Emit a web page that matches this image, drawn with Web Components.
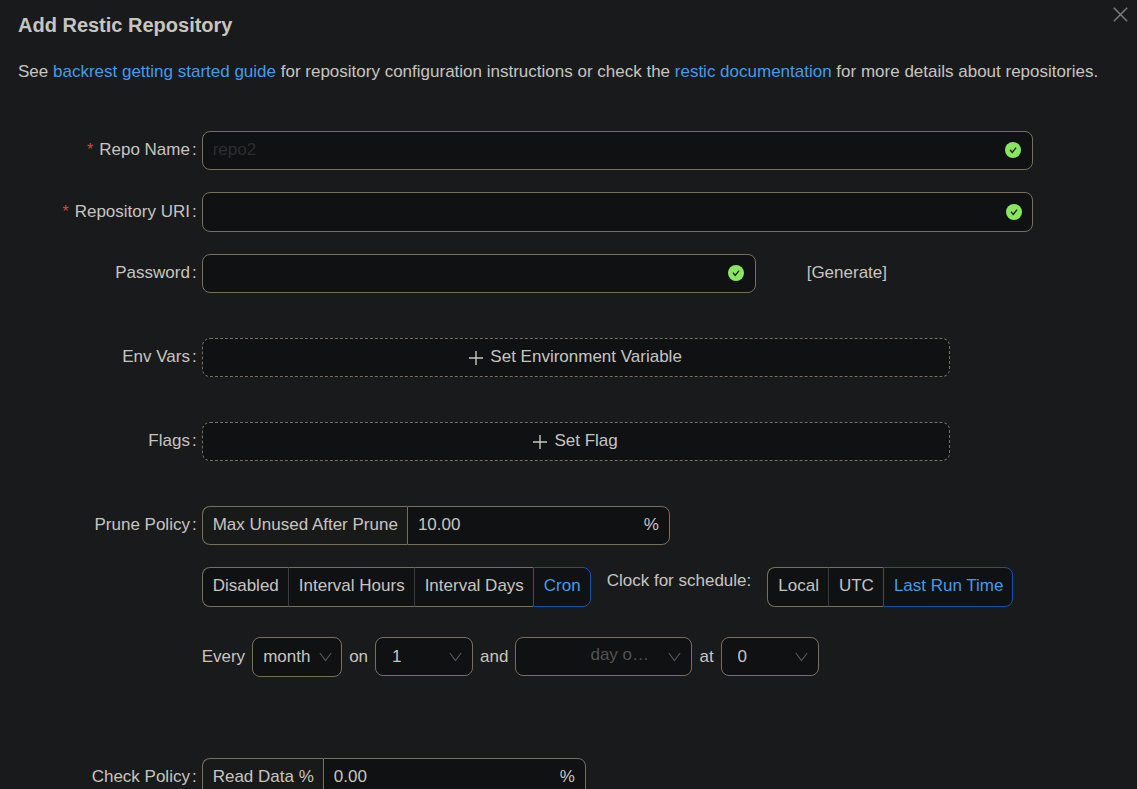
<!DOCTYPE html>
<html lang="en">
<head>
<meta charset="utf-8">
<title>Add Restic Repository</title>
<style>
	body {
		margin: 0;
		background: #181a1b;
		color: #c8c5c0;
		font: 17px/27px "Liberation Sans", Arial, sans-serif;
		--field: #0f1112;
		--addon: #181a19;
		--line: #7a6f5f;
		--divider: #3b3e40;
		--link: #459be8;
		--active: #1253b2;
		--muted: #545352;
	}
</style>
</head>
<body>

<repo-modal></repo-modal>

<script>
const define = (name, html, setup) => {
	const template = document.createElement('template');
	template.innerHTML = html;

	customElements.define(name, class extends HTMLElement {
		constructor() {
			super();
			this.attachShadow({mode: 'open'}).appendChild(template.content.cloneNode(true));
		}

		connectedCallback() {
			if (setup && !this.ready) {
				this.ready = true;
				setup(this, this.shadowRoot);
			}
		}
	});
};

// label column, control column and a spare column on the right
define('form-row', `
	<style>
		:host { display: grid; grid-template-columns: 4fr 18fr 2fr; margin-bottom: 22px; }
		:host([wide]) { margin-bottom: 45px; }
		.label { text-align: right; padding: 5px 5px 0 0; white-space: nowrap; }
		:host([tall]) .label { padding-top: 6px; }
		.colon { margin-left: 2px; }
		.star { display: none; color: #d04a49; margin-right: 6px; font-size: 16px; }
		:host([required]) .star { display: inline; }
	</style>
	<div class="label"><span class="star">*</span><span class="text"></span><span class="colon">:</span></div>
	<div><slot></slot></div>
`, (el, root) => {
	root.querySelector('.text').textContent = el.getAttribute('label');
});

define('text-field', `
	<style>
		:host { display: flex; align-items: center; box-sizing: border-box; height: 39px; padding: 0 11px 2px 10px; border: 1px solid var(--line); border-radius: 8px; background: var(--field); }
		:host([tall]) { height: 40px; padding: 0 10px 0 10px; }
		input { flex: 1; min-width: 0; border: 0; padding: 0; outline: 0; background: none; color: inherit; font: inherit; }
		input::placeholder { color: #2c2e2f; opacity: 1; }
		svg { flex: none; }
	</style>
	<input>
	<svg width="16" height="16" viewBox="0 0 16 16">
		<circle cx="8" cy="8" r="8" fill="#8ae660"/>
		<path d="M5 7.8l2.2 2.6 3.9-4.8" fill="none" stroke="#182214" stroke-width="1.4"/>
	</svg>
`, (el, root) => {
	const input = root.querySelector('input');
	input.type = el.getAttribute('type') || 'text';
	input.placeholder = el.getAttribute('placeholder') || '';
	input.setAttribute('aria-label', el.getAttribute('label'));
});

define('dashed-button', `
	<style>
		:host { display: block; width: 90%; }
		button { display: flex; align-items: center; justify-content: center; gap: 7px; box-sizing: border-box; width: 100%; height: 39px; padding: 0 10px 2px; border: 1px dashed var(--line); border-radius: 8px; background: var(--field); color: inherit; font: inherit; }
		svg { margin-top: 2px; }
	</style>
	<button type="button">
		<svg width="14" height="14" viewBox="0 0 14 14" fill="none" stroke="currentColor" stroke-width="1.4"><path d="M7 0v14M0 7h14"/></svg>
		<span><slot></slot></span>
	</button>
`);

define('percent-input', `
	<style>
		:host { display: flex; }
		label, .box { box-sizing: border-box; height: 39px; padding: 4px 10px 0; border: 1px solid var(--line); white-space: nowrap; }
		label { padding-right: 9px; border-right: 0; border-radius: 8px 0 0 8px; background: var(--addon); }
		.box { display: flex; width: 263px; border-radius: 0 8px 8px 0; background: var(--field); }
		input { flex: 1; min-width: 0; height: 27px; border: 0; padding: 0; outline: 0; background: none; color: inherit; font: inherit; }
	</style>
	<label for="value"></label>
	<div class="box"><input id="value" inputmode="decimal"><span>%</span></div>
`, (el, root) => {
	root.querySelector('label').textContent = el.getAttribute('label');
	root.querySelector('input').value = el.getAttribute('value');
});

define('radio-group', `
	<style>
		:host { display: flex; }
		label { position: relative; box-sizing: border-box; height: 40px; padding: 4px 9px 0 10px; border: solid var(--line); border-width: 1px 0; background: var(--field); white-space: nowrap; }
		label:first-of-type { border-left-width: 1px; border-radius: 8px 0 0 8px; }
		label:last-of-type { border-right-width: 1px; border-radius: 0 8px 8px 0; }
		label + label { border-left: 1px solid var(--divider); }
		label:has(:checked) { border-color: var(--active); color: var(--link); }
		input { position: absolute; inset: 0; margin: 0; opacity: 0; }
	</style>
`, (el, root) => {
	el.getAttribute('options').split(',').forEach(text => {
		const label = document.createElement('label');
		const input = document.createElement('input');
		input.type = 'radio';
		input.name = 'option';
		input.checked = text === el.getAttribute('value');
		label.append(input, text);
		root.appendChild(label);
	});
});

define('cron-select', `
	<style>
		:host { display: grid; align-items: center; width: 98px; }
		:host([size="unit"]) { width: 90px; }
		:host([size="large"]) { width: 177px; }
		select, svg { grid-area: 1 / 1; }
		select { appearance: none; box-sizing: border-box; width: 100%; height: 39px; padding: 0 30px 0 16px; border: 1px solid var(--line); border-radius: 8px; outline: 0; background: var(--field); color: inherit; font: inherit; }
		svg { justify-self: end; margin: 1px 11px 0 0; pointer-events: none; }
		:host([size="unit"]) select { height: 40px; padding: 0 20px 1px 10px; }
		:host([size="unit"]) svg { margin: 0 10px 0 0; }
		:host([size="large"]) select { padding: 0 30px 5px 74px; color: var(--muted); }
	</style>
	<select></select>
	<svg width="13" height="10" viewBox="0 0 13 10" fill="none" stroke="#565756" stroke-width="1.2"><path d="M.8 1l5.7 7.6L12.2 1"/></svg>
`, (el, root) => {
	const select = root.querySelector('select');
	select.add(new Option(el.getAttribute('value')));
	select.setAttribute('aria-label', el.getAttribute('label'));
});

define('repo-modal', `
	<style>
		:host { display: block; box-sizing: border-box; height: 100vh; overflow: hidden; padding: 12px 12px 0 17px; position: relative; }
		h1, p { padding-left: 1px; }
		h1 { margin: 0 0 19px; font-size: 20px; line-height: 27px; }
		p { margin: 0 0 46px; }
		a { color: var(--link); text-decoration: none; }
		.close { position: absolute; top: 7px; right: 9px; display: block; padding: 0; border: 0; background: none; color: #7d7c7a; }
		.close svg { display: block; }
		.password { display: grid; grid-template-columns: 2fr 1fr; }
		.generate { justify-self: start; margin-left: 51px; padding: 0 0 2px; border: 0; background: none; color: inherit; font: inherit; }
		.schedule { display: flex; gap: 16px; margin: 22px 0 30px; white-space: nowrap; }
		.cron { display: flex; align-items: flex-start; gap: 7px; height: 40px; margin-bottom: 36px; }
		.cron span { padding-top: 6px; }
	</style>
	<button class="close" type="button" aria-label="Close">
		<svg width="15" height="15" viewBox="0 0 15 15" fill="none" stroke="currentColor" stroke-width="1.5"><path d="M.8 .8l13.4 13.4M14.2 .8L.8 14.2"/></svg>
	</button>
	<h1>Add Restic Repository</h1>
	<p>See <a href="#guide">backrest getting started guide</a> for repository configuration instructions or check the <a href="#docs">restic documentation</a> for more details about repositories.</p>
	<form>
		<form-row label="Repo Name" required><text-field label="Repo Name" placeholder="repo2"></text-field></form-row>
		<form-row label="Repository URI" required tall><text-field tall label="Repository URI"></text-field></form-row>
		<form-row label="Password" wide>
			<div class="password">
				<text-field label="Password"></text-field>
				<button class="generate" type="button">[Generate]</button>
			</div>
		</form-row>
		<form-row label="Env Vars" wide><dashed-button>Set Environment Variable</dashed-button></form-row>
		<form-row label="Flags" wide><dashed-button>Set Flag</dashed-button></form-row>
		<form-row label="Prune Policy" wide>
			<percent-input label="Max Unused After Prune" value="10.00"></percent-input>
			<div class="schedule">
				<radio-group options="Disabled,Interval Hours,Interval Days,Cron" value="Cron"></radio-group>
				<span>Clock for schedule:</span>
				<radio-group options="Local,UTC,Last Run Time" value="Last Run Time"></radio-group>
			</div>
			<div class="cron">
				<span>Every</span>
				<cron-select size="unit" label="Period" value="month"></cron-select>
				<span>on</span>
				<cron-select label="Day of the month" value="1"></cron-select>
				<span>and</span>
				<cron-select size="large" label="Day of the week" value="day o…"></cron-select>
				<span>at</span>
				<cron-select label="Hour" value="0"></cron-select>
			</div>
		</form-row>
		<form-row label="Check Policy"><percent-input label="Read Data %" value="0.00"></percent-input></form-row>
	</form>
`);
</script>
</body>
</html>
